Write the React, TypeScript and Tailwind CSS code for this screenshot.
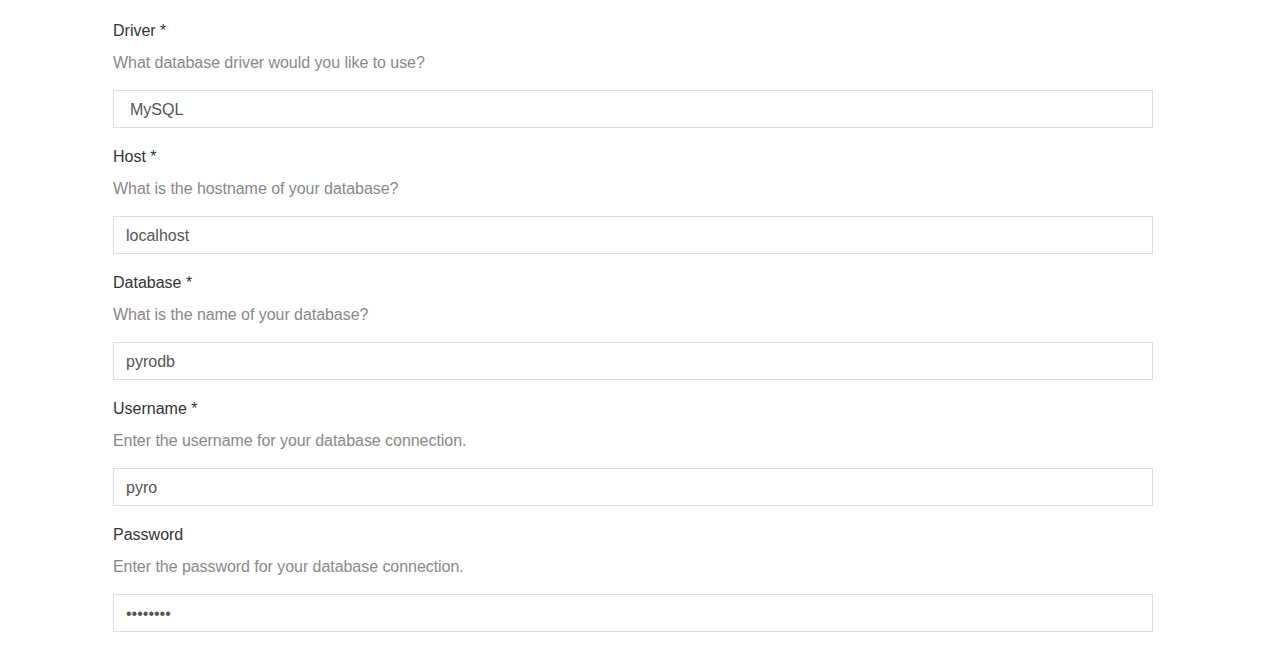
const fields = [
  { label: "Driver *", help: "What database driver would you like to use?", value: "MySQL", select: true },
  { label: "Host *", help: "What is the hostname of your database?", value: "localhost" },
  { label: "Database *", help: "What is the name of your database?", value: "pyrodb" },
  { label: "Username *", help: "Enter the username for your database connection.", value: "pyro" },
  { label: "Password", help: "Enter the password for your database connection.", value: "password", password: true },
];

export default function App() {
  return (
    <div className="min-h-screen bg-white pt-[19px] font-['Liberation_Sans',Arial,sans-serif]">
      <div className="ml-[113px] w-[1040px] flex flex-col gap-[17px]">
        {fields.map((f) => (
          <div key={f.label} className="flex flex-col">
            <label className="text-[16px] leading-6 text-[#333]">{f.label}</label>
            <p className="mt-2 text-[16px] leading-6 tracking-[-0.05px] text-[#888]">{f.help}</p>
            <div className="mt-[15px]">
              {f.select ? (
                <div className="h-[38px] border border-[#ddd] bg-white pl-4 pt-px flex items-center text-[16px] text-[#555]">
                  {f.value}
                </div>
              ) : (
                <input
                  readOnly
                  type={f.password ? "password" : "text"}
                  value={f.value}
                  className="w-full h-[38px] border border-[#ddd] bg-white px-3 pt-px text-[16px] text-[#555] outline-none"
                />
              )}
            </div>
          </div>
        ))}
      </div>
    </div>
  );
}
